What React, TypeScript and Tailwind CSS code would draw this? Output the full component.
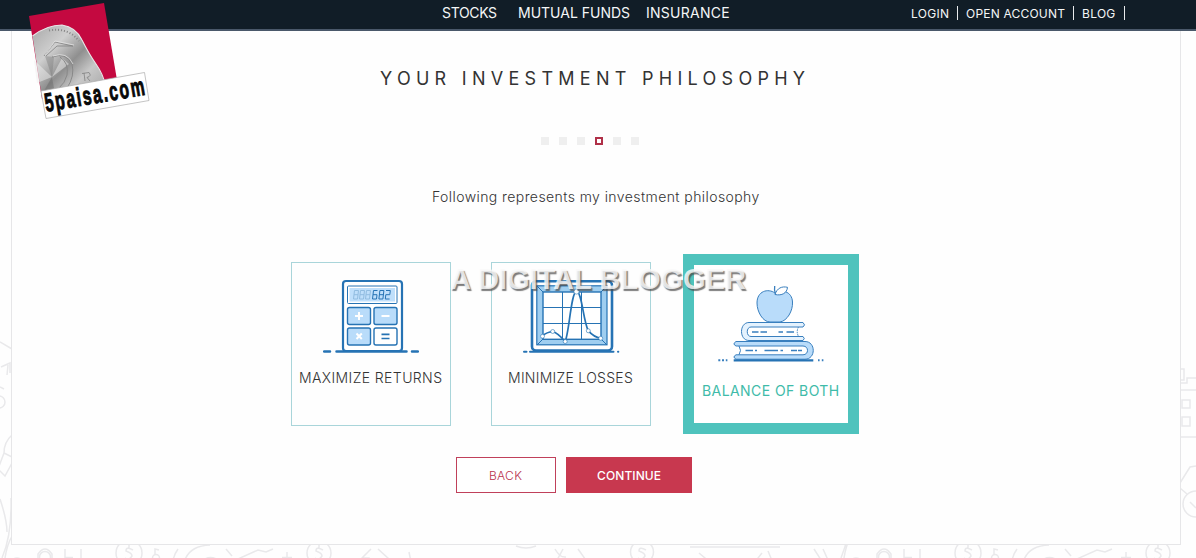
import React from "react";

function DoodleRow() {
  return (
    <g>
      <path d="M0 499 Q7 520 7 532 M11 498 Q12 535 2 558 M12 536 Q7 545 5 558" />
      <circle cx="17" cy="565" r="7" />
      <circle cx="45" cy="557" r="5.5" />
      <path d="M38 563 V554 Q45 544 52 554 V563 M65 549 V563 M81 549 V563 M65 557.5 H73 M96 562 H99" />
      <circle cx="129" cy="553" r="13" />
      <path d="M133 550 Q126 546 126 551 Q132 553 132 556 Q129 561 125 558 M129 545 V548 M129 559 V562" />
      <circle cx="156" cy="558" r="3.5" />
      <path d="M155 554 V549 L159 550 M178 549 Q173 556 173 563 M184 563 Q188 546 210 545 M200 563 Q210 552 222 563" />
      <path d="M226 549 L232 556 M229 563 L258 550 L266 552 L273 549 M287 552 V563 M282 557.5 H292" />
      <circle cx="319" cy="553" r="12" />
      <path d="M323 550 Q316 546 316 551 Q322 553 322 556 Q319 561 315 558 M319 545 V548 M319 559 V562" />
      <path d="M371 549 L362 558 L369 558 V562 M378 549 L389 559 L381 560 M409 552 L411 562" />
    </g>
  );
}

function Doodles() {
  return (
    <svg
      className="absolute inset-0"
      width="1196"
      height="558"
      viewBox="0 0 1196 558"
      fill="none"
      stroke="#e9e9eb"
      strokeWidth="1.5"
      aria-hidden="true"
    >
      <DoodleRow />
      <path d="M516 546 Q526 550 536 546 M555 549 Q560 558 566 557 M563 549 L556 562 M578 549 L588 563" />
      <circle cx="642" cy="552" r="11.5" />
      <path d="M646 550 Q639 546 639 551 Q645 553 645 556 Q642 561 638 558 M690 547 H780 M699 553 L711 563 M762 553 L754 563 M768 551 L773 563 M814 549 L823 563 M823 549 L828 560" />
      <g transform="translate(839 0)">
        <DoodleRow />
      </g>
      <path d="M0 342 L12 349 M1 367 L10 363 L10 373 M8 365 L7 375 M0 387 L4 389" />
      <circle cx="-1" cy="402" r="6" />
      <path d="M12 435 Q4 442 4 453 L12 457 M4 453 L-2 469 L5 476 L12 463" />
      <path d="M1180 369 H1184 V380 H1180 M1181 383 H1187 V378 H1196 M1180 390 H1196 M1180 437 H1196" />
      <rect x="1182" y="400" width="8" height="8" />
      <rect x="1182" y="417" width="8" height="9" />
      <path d="M1180 483 L1190 467 L1196 466 M1180 488 L1187 494 M1190 502 L1196 508" />
      <circle cx="1196" cy="504" r="13" />
    </svg>
  );
}

function Logo() {
  return (
    <svg
      className="absolute top-0 left-[24px]"
      width="160"
      height="140"
      viewBox="24 0 160 140"
      role="img"
      aria-label="5paisa.com"
    >
      <defs>
        <linearGradient id="coin" x1="0" y1="0" x2="1" y2="1">
          <stop offset="0" stopColor="#a8a8a8" />
          <stop offset="0.3" stopColor="#cfcfcf" />
          <stop offset="0.52" stopColor="#8f8f8f" />
          <stop offset="0.7" stopColor="#c8c8c8" />
          <stop offset="1" stopColor="#a0a0a0" />
        </linearGradient>
      </defs>
      <path d="M29 16 L104 3 L118 86 L42 99 Z" fill="#c40940" />
      <path d="M32.500 36 Q47 25 62 25 Q76 27 82 40 Q89 54 96 64 Q103 74 105 86 L42 98 Z" fill="url(#coin)" />
      <path d="M52 77 L34 60 L37 83 Z" fill="#eee" opacity=".5" />
      <path d="M52 77 L62 58 L69 64 Z" fill="#eee" opacity=".5" />
      <path d="M52 77 L41 96 L55 94 Z" fill="#666" opacity=".45" />
      <path d="M52 77 L45 56 L54 57 Z" fill="#777" opacity=".4" />
      <path d="M32.500 36 Q47 25 62 25 Q76 27 82 40 Q89 54 96 64 Q103 74 105 84" fill="none" stroke="#e8e8e8" strokeWidth="1.1" />
      <path d="M49 30.500 Q68 27 79 41" fill="none" stroke="#858585" strokeWidth="2" strokeDasharray="1 2" />
      <path d="M44 56 L55 42 L73 46 L57 46 L46 56" fill="none" stroke="#808080" strokeWidth=".8" />
      <path d="M52 57 Q66 52 72 64 Q75 76 67 88 M60 57 Q69 63 67 75 Q65 83 59 88" fill="none" stroke="#858585" strokeWidth=".9" />
      <path d="M45 55 L55 41 L74 45 M53 56 Q67 51 73 64" fill="none" stroke="#e8e8e8" strokeWidth=".7" />
      <path d="M82 73.500 L89 72.500 Q92 76 87 77.500 L90 81 M84 73 L85 81" fill="none" stroke="#808080" strokeWidth=".8" />
      <path d="M41 91 L144.500 72.500 L149 100.500 L46 118.500 Z" fill="#fff" stroke="#aaa" strokeWidth=".7" />
      <text
        transform="translate(46.300 111.800) rotate(-9.800) scale(.6 1)"
        fontFamily="Liberation Sans, sans-serif"
        fontWeight="700"
        fontSize="26"
        textLength="168"
        lengthAdjust="spacing"
        fill="#080808"
        stroke="#080808"
        strokeWidth="1"
      >
        5paisa.com
      </text>
    </svg>
  );
}

function CalculatorIcon() {
  return (
    <svg width="102" height="78" viewBox="320 278 102 78" fill="none" stroke="#2673b4" aria-hidden="true">
      <rect x="343" y="281" width="59" height="70" rx="3" strokeWidth="2.200" fill="#fff" />
      <rect x="347.500" y="286" width="49.500" height="17.500" rx="1" strokeWidth="1" fill="#fff" />
      <rect x="349.500" y="288" width="45.500" height="13.500" fill="#bfdffb" stroke="none" />
      <g strokeWidth="1">
        <g stroke="#91bce0">
          <path d="M354.500 290.500 h4 l-1 8.500 h-4 z M354 294.700 h4" />
          <path d="M360.500 290.500 h4 l-1 8.500 h-4 z M360 294.700 h4" />
          <path d="M366.500 290.500 h4 l-1 8.500 h-4 z M366 294.700 h4" />
        </g>
        <path d="M377.500 290.500 h-4 l-1 8.500 h4 l.5 -4.300 h-4" />
        <path d="M379.900 290.500 h4 l-1 8.500 h-4 z M379.400 294.700 h4" />
        <path d="M386 290.500 h4.300 l-.5 4.200 h-4 l-.5 4.300 h4.300" />
      </g>
      <g strokeWidth="1.400" fill="#b9dcfa">
        <rect x="347.500" y="307.500" width="23" height="17" rx="2" />
        <rect x="374" y="307.500" width="23" height="17" rx="2" />
        <rect x="347.500" y="328" width="23" height="17" rx="2" />
        <rect x="374" y="328" width="23" height="17" rx="2" fill="#fff" />
      </g>
      <g stroke="#fff" strokeWidth="2">
        <path d="M359 312 V320 M355 316 H363 M381.500 316 H389.500 M356.500 333.500 L361.800 339 M361.800 333.500 L356.500 339" />
      </g>
      <path d="M381.500 334.300 H389.500 M381.500 338.500 H389.500" strokeWidth="1.700" />
      <path d="M336.500 351.500 H406.500 M324.200 351.500 H330 M412 351.500 H417.800" strokeWidth="2.500" strokeLinecap="round" />
    </svg>
  );
}

function ChartIcon() {
  return (
    <svg width="102" height="78" viewBox="520 278 102 78" fill="none" stroke="#2673b4" aria-hidden="true">
      <rect x="532" y="281.300" width="80" height="69.200" rx="4" strokeWidth="2.600" fill="#fff" />
      <rect x="536.800" y="285.800" width="70.200" height="59" strokeWidth="1.200" fill="#9fcef0" />
      <rect x="543" y="292" width="58" height="47.300" strokeWidth="1.400" fill="#fff" />
      <path d="M537 286 L543 292 M607 286 L601 292 M537 345 L543 339 M607 345 L601 339 M562.500 292 V339 M581.500 292 V339 M543 307.500 H601 M543 323.500 H601" strokeWidth="1" />
      <path d="M542.300 336 Q547 332 552.700 331.500 Q558 333 565 341.500 C569 335 571 292 576.500 291 C582 292 583 320 588.300 330.800 Q594 337 600.700 338.300" strokeWidth="1.700" />
      <g fill="#fff" strokeWidth=".6">
        <circle cx="542.500" cy="336.300" r="2" />
        <circle cx="552.700" cy="331.500" r="2" />
        <circle cx="565.200" cy="341.500" r="2" />
        <circle cx="576.500" cy="291.500" r="2.600" />
        <circle cx="588.300" cy="330.800" r="2" />
        <circle cx="600.700" cy="338.300" r="2" />
      </g>
      <path d="M530 351.700 H613.500 M524 351.700 H526.500 M618 351.700 H618.300" strokeWidth="2" strokeLinecap="round" />
    </svg>
  );
}

function BooksIcon() {
  return (
    <svg width="110" height="80" viewBox="716 284 110 80" fill="none" stroke="#397fbe" strokeWidth="1" aria-hidden="true">
      <path d="M775 293 C768 288 757 291 757 303 C757 312 763 322 770 322 H780 C787 321 793 311 792.500 302 C792 291 781 289 775 293 Z" fill="#b9dcfa" />
      <path d="M775.500 294 Q774 290 774.700 286" strokeWidth="1.300" />
      <path d="M775 294.500 C777 288 782 286 787.500 287.300 C787 293 782 296 775 294.500 Z" fill="#fff" />
      <path d="M803 322.500 H749 C739 322.500 739 340.500 749 340.500 H803 Q805.500 338.500 803 336.500 H751 C746 336.500 746 327 751 327 H803 Q806 325 803 322.500 Z" fill="#e4f2fe" />
      <path d="M798.500 327 Q796 331.500 798.500 336.500" strokeDasharray="1.500 1" />
      <path d="M752 332 H758.500 M760.500 332 H767 M778.500 332 H783 M786.500 332 H794" strokeWidth="1.300" />
      <path d="M736 341.500 H805 C816 341.500 816 359.200 805 359.200 H736 Q732 357 736 354.800 H803 C809 354.800 809 346 803 346 H736 Q732 344 736 341.500 Z" fill="#b9dcfa" />
      <path d="M739 346 Q742 350.500 739 354.800" />
      <path d="M745.500 350.500 H753 M755 350.500 H757 M764.500 350.500 H778 M780.500 350.500 H783 M791 350.500 H797 M798 350.500 H802" strokeWidth="1.300" />
      <path d="M733.700 360.300 H813.300" stroke="#2673b4" strokeWidth="2.200" />
      <path d="M718.300 360.300 h2 M722 360.300 h2 M725.800 360.300 h1.600 M818 360.300 h1.600 M821.800 360.300 h1.600" strokeWidth="1.900" />
    </svg>
  );
}

function Step({ active }: { active?: boolean }) {
  return (
    <li className={active ? "h-2 w-2 border-2 border-[#b03048] bg-white" : "h-2 w-2 bg-[#efefef]"} />
  );
}

export default function App() {
  return (
    <div className="relative flex h-[558px] w-[1196px] flex-col overflow-hidden bg-[#fefefe] font-['Inter',sans-serif] text-[#333]">
      <Doodles />
      <header className="relative flex h-[31px] shrink-0 items-start border-b-2 border-[#4a586a] bg-[#111d27] whitespace-nowrap text-[#f4f6f7]">
        <nav className="flex w-[911px] pt-[3px] pl-[442px] text-[14px] leading-5">
          <a className="w-[76px] tracking-[-0.35px]">STOCKS</a>
          <a className="w-[128px] tracking-[0px]">MUTUAL FUNDS</a>
          <a className="tracking-[0.25px]">INSURANCE</a>
        </nav>
        <nav className="flex pt-[4px] text-[12px] leading-5">
          <a className="w-[46px] tracking-[0.3px]">LOGIN</a>
          <span className="mt-0.5 mr-[8px] h-[14px] w-px bg-[#e8eaec]" />
          <a className="w-[107px] tracking-[0.2px]">OPEN ACCOUNT</a>
          <span className="mt-0.5 mr-[8px] h-[14px] w-px bg-[#e8eaec]" />
          <a className="w-[42px] tracking-[0.3px]">BLOG</a>
          <span className="mt-0.5 h-[14px] w-px bg-[#e8eaec]" />
        </nav>
      </header>

      <main className="relative ml-[11px] flex h-[514px] w-[1170px] flex-col border border-t-0 border-[#e6e6e8] bg-[#fefefe] whitespace-nowrap">
        <h1 className="mt-[34px] ml-[368px] text-[18px] leading-[27px] tracking-[5.28px]">YOUR INVESTMENT PHILOSOPHY</h1>
        <ul className="mt-[45px] ml-[529px] flex gap-[10px]">
          <Step />
          <Step />
          <Step />
          <Step active />
          <Step />
          <Step />
        </ul>
        <p className="mt-[42px] ml-[420px] text-[14px] leading-5 font-light tracking-[0.42px]">
          Following represents my investment philosophy
        </p>

        <section className="mt-[47px] ml-[279px] flex items-center text-[14px] leading-5 font-light">
          <div className="flex h-[164px] w-[160px] flex-col border border-[#a9d5da] pt-[15px]">
            <div className="ml-[28px]">
              <CalculatorIcon />
            </div>
            <span className="mt-[12px] ml-[7px] tracking-[0.4px]">MAXIMIZE RETURNS</span>
          </div>
          <div className="ml-[40px] flex h-[164px] w-[160px] flex-col border border-[#a9d5da] pt-[15px]">
            <div className="ml-[28px]">
              <ChartIcon />
            </div>
            <span className="mt-[12px] ml-[16px] tracking-[0.28px]">MINIMIZE LOSSES</span>
          </div>
          <div className="ml-[32px] flex h-[180px] w-[176px] flex-col border-[11px] border-[#4fc3bd] bg-white pt-[19px] text-[#3fbba9]">
            <div className="ml-[22px]">
              <BooksIcon />
            </div>
            <span className="mt-[17px] ml-[8px] font-normal tracking-[0.42px]">BALANCE OF BOTH</span>
          </div>
        </section>

        <div className="mt-[23px] ml-[444px] flex gap-[10px] text-[12px]">
          <button className="flex h-[36px] w-[100px] items-center border border-[#c0405a] bg-white pt-[2px] pl-[32px] font-light text-[#b9304c]">
            <span className="tracking-[0.3px]">BACK</span>
          </button>
          <button className="flex h-[36px] w-[126px] items-center bg-[#c8384f] pt-[2px] pl-[31px] font-medium text-white">
            <span className="tracking-[0.1px]">CONTINUE</span>
          </button>
        </div>
      </main>

      <Logo />
      <div className="absolute top-[262px] left-[450px] font-['Liberation_Sans',sans-serif] text-[29px] leading-[34px] font-bold tracking-[0px] whitespace-nowrap text-[rgba(250,250,250,0.82)] [text-shadow:1.5px_1.5px_1px_rgba(70,70,70,0.7)]">
        A DIGITAL BLOGGER
      </div>
    </div>
  );
}
